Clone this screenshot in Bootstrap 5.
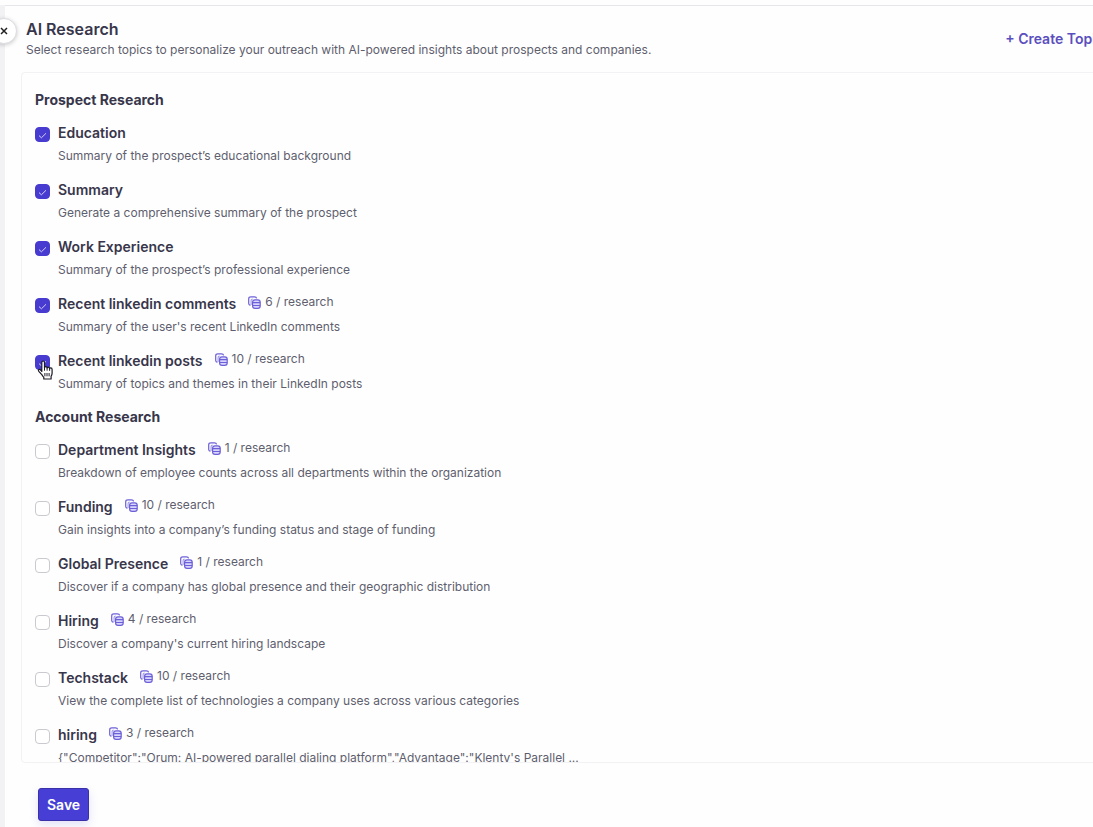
<!DOCTYPE html>
<html lang="en">
<head>
<meta charset="utf-8">
<meta name="viewport" content="width=device-width, initial-scale=1">
<title>AI Research</title>
<link href="https://cdn.jsdelivr.net/npm/bootstrap@5.3.0/dist/css/bootstrap.min.css" rel="stylesheet">
<style>
  body { font-family: Inter, "Liberation Sans", sans-serif; font-size: 12px; line-height: 20px; color: #5f5e6e; background: #fefefe; }
  .shell { padding-top: 5px; }
  .rail { width: 5px; background: #f2f2f5; }
  /* The drawer is wider than the window and runs off its right edge */
  .drawer { width: calc(100% + 32px); margin-right: -32px; border-top: 1px solid #e6e6ea; }
  .drawer-head { padding: 12px 0 0 21px; height: 67px; }
  .page-title { font-size: 16px; line-height: 22px; font-weight: 600; color: #38364b; }
  .create-link { font-size: 14px; font-weight: 600; color: #5a4fbf; padding: 0 26px 0 0; margin-top: 10px; }
  .close-btn { left: -14px; top: 12px; width: 26px; height: 26px; color: #222; background: #fff; border: 1px solid #dcdce2; box-shadow: 0 1px 4px #0003; }
  .topics { margin-left: 16px; padding: 17px 13px 0; border: 1px solid #f2f2f5; border-radius: 4px; }
  .group-title { font-size: 14px; line-height: 20px; font-weight: 700; color: #38364b; margin-bottom: 12px; }
  .topic { height: 57px; column-gap: 8px; }
  .topic-name { font-size: 14px; line-height: 22px; font-weight: 600; color: #38364b; }
  .topic-text { margin-top: 2px; }
  .price { margin-left: 12px; margin-top: -3px; gap: 4px; }
  .tick { appearance: none; width: 15px; height: 15px; margin-top: 5px; border: 1px solid #c9c9cf; border-radius: 4px; background: #fff; }
  .tick:checked { border-color: #473bd0; background: #473bd0 url("data:image/svg+xml,%3Csvg xmlns='http://www.w3.org/2000/svg' viewBox='0 0 13 13'%3E%3Cpath d='M3 7.6l2.4 2.2 4.6-4.5' fill='none' stroke='%23d5d0ff' stroke-width='1'/%3E%3C/svg%3E") center / 13px 13px no-repeat; }
  .pointer { left: 2px; top: 10px; }
  .drawer-foot { padding: 25px 0 6px 33px; }
  .save-btn { height: 33px; padding: 0 8px; font-size: 14px; font-weight: 600; line-height: 20px; color: #fff; background: #473fd5; border: 1px solid #3a31a8; border-radius: 3px; box-shadow: 0 4px 10px #473fd526; }
</style>
</head>
<body class="overflow-hidden">
<svg class="d-none">
  <symbol id="credits" viewBox="0 0 13 13">
    <g fill="none" stroke="#6c60d8" stroke-width="1.2">
      <path d="M2.4 9.4Q.7 9 .7 7.6V2.8Q.7.8 3 .8h3.4q2 0 2.200 1.500"/>
      <path d="M3.100 9V4.600q0-1.500 1.600-1.500" stroke-opacity=".6"/>
      <rect x="4.600" y="3.800" width="7.600" height="8.500" rx="2.400" fill="#d9d4fb"/>
      <path d="M4.600 6.700h7.600M4.600 9.500h7.600"/>
    </g>
  </symbol>
</svg>
<div class="shell vh-100 d-flex">
  <div class="rail flex-shrink-0"></div>
  <main class="drawer position-relative flex-shrink-0 d-flex flex-column">
    <button type="button" class="close-btn position-absolute rounded-circle p-0 d-flex align-items-center justify-content-center" aria-label="Close">
      <svg width="8" height="8" viewBox="0 0 8 8"><path d="M1 1l6 6M7 1L1 7" stroke="currentColor" stroke-width="1.5"/></svg>
    </button>
    <header class="drawer-head d-flex justify-content-between align-items-start">
      <div>
        <h1 class="page-title mb-0">AI Research</h1>
        <p class="mb-0">Select research topics to personalize your outreach with AI-powered insights about prospects and companies.</p>
      </div>
      <button type="button" class="create-link btn btn-link border-0 text-decoration-none text-nowrap">+ Create Topic</button>
    </header>
    <form class="topics flex-fill overflow-auto" id="topics">
      <h2 class="group-title">Prospect Research</h2>
      <div class="topic d-flex"><input class="tick flex-shrink-0" type="checkbox" id="t1" checked><div><div class="d-flex"><label class="topic-name" for="t1">Education</label></div><p class="topic-text mb-0">Summary of the prospect’s educational background</p></div></div>
      <div class="topic d-flex"><input class="tick flex-shrink-0" type="checkbox" id="t2" checked><div><div class="d-flex"><label class="topic-name" for="t2">Summary</label></div><p class="topic-text mb-0">Generate a comprehensive summary of the prospect</p></div></div>
      <div class="topic d-flex"><input class="tick flex-shrink-0" type="checkbox" id="t3" checked><div><div class="d-flex"><label class="topic-name" for="t3">Work Experience</label></div><p class="topic-text mb-0">Summary of the prospect’s professional experience</p></div></div>
      <div class="topic d-flex"><input class="tick flex-shrink-0" type="checkbox" id="t4" checked><div><div class="d-flex"><label class="topic-name" for="t4">Recent linkedin comments</label><span class="price d-flex align-items-center"><svg width="13" height="13"><use href="#credits"/></svg>6 / research</span></div><p class="topic-text mb-0">Summary of the user's recent LinkedIn comments</p></div></div>
      <div class="topic d-flex position-relative"><input class="tick flex-shrink-0" type="checkbox" id="t5" checked><div><div class="d-flex"><label class="topic-name" for="t5">Recent linkedin posts</label><span class="price d-flex align-items-center"><svg width="13" height="13"><use href="#credits"/></svg>10 / research</span></div><p class="topic-text mb-0">Summary of topics and themes in their LinkedIn posts</p></div>
        <svg class="pointer position-absolute" width="17" height="20" viewBox="0 0 17 20"><path d="M4.8 11.4V2.6q0-1.6 1.3-1.6t1.4 1.6v5.1q.2-1 1.3-1t1.3 1.3q.2-.8 1.2-.8t1.3 1.4q.2-.7 1.1-.7 1.4 0 1.4 1.7v3.6q0 1.5-1 3.1V19H6.8v-1.7q-1-1-2-2.7l-3-3.3Q1 10.2 1.8 9.500q1-.8 3 1.900z" fill="#fff" stroke="#1b1a26" stroke-width="1.200" stroke-linejoin="round"/><path d="M7.500 7.500v3.200M10.100 8v2.700M12.600 8.800v2M7.900 13v3.300M10 13v3.300M12.100 13v3.300" stroke="#1b1a26" stroke-width="1" fill="none"/></svg>
      </div>
      <h2 class="group-title">Account Research</h2>
      <div class="topic d-flex"><input class="tick flex-shrink-0" type="checkbox" id="t6"><div><div class="d-flex"><label class="topic-name" for="t6">Department Insights</label><span class="price d-flex align-items-center"><svg width="13" height="13"><use href="#credits"/></svg>1 / research</span></div><p class="topic-text mb-0">Breakdown of employee counts across all departments within the organization</p></div></div>
      <div class="topic d-flex"><input class="tick flex-shrink-0" type="checkbox" id="t7"><div><div class="d-flex"><label class="topic-name" for="t7">Funding</label><span class="price d-flex align-items-center"><svg width="13" height="13"><use href="#credits"/></svg>10 / research</span></div><p class="topic-text mb-0">Gain insights into a company’s funding status and stage of funding</p></div></div>
      <div class="topic d-flex"><input class="tick flex-shrink-0" type="checkbox" id="t8"><div><div class="d-flex"><label class="topic-name" for="t8">Global Presence</label><span class="price d-flex align-items-center"><svg width="13" height="13"><use href="#credits"/></svg>1 / research</span></div><p class="topic-text mb-0">Discover if a company has global presence and their geographic distribution</p></div></div>
      <div class="topic d-flex"><input class="tick flex-shrink-0" type="checkbox" id="t9"><div><div class="d-flex"><label class="topic-name" for="t9">Hiring</label><span class="price d-flex align-items-center"><svg width="13" height="13"><use href="#credits"/></svg>4 / research</span></div><p class="topic-text mb-0">Discover a company's current hiring landscape</p></div></div>
      <div class="topic d-flex"><input class="tick flex-shrink-0" type="checkbox" id="t10"><div><div class="d-flex"><label class="topic-name" for="t10">Techstack</label><span class="price d-flex align-items-center"><svg width="13" height="13"><use href="#credits"/></svg>10 / research</span></div><p class="topic-text mb-0">View the complete list of technologies a company uses across various categories</p></div></div>
      <div class="topic d-flex"><input class="tick flex-shrink-0" type="checkbox" id="t11"><div><div class="d-flex"><label class="topic-name" for="t11">hiring</label><span class="price d-flex align-items-center"><svg width="13" height="13"><use href="#credits"/></svg>3 / research</span></div><p class="topic-text mb-0">{"Competitor":"Orum: AI-powered parallel dialing platform","Advantage":"Klenty's Parallel ...</p></div></div>
    </form>
    <footer class="drawer-foot">
      <button type="submit" form="topics" class="save-btn">Save</button>
    </footer>
  </main>
</div>
<script src="https://cdn.jsdelivr.net/npm/bootstrap@5.3.0/dist/js/bootstrap.bundle.min.js"></script>
</body>
</html>
